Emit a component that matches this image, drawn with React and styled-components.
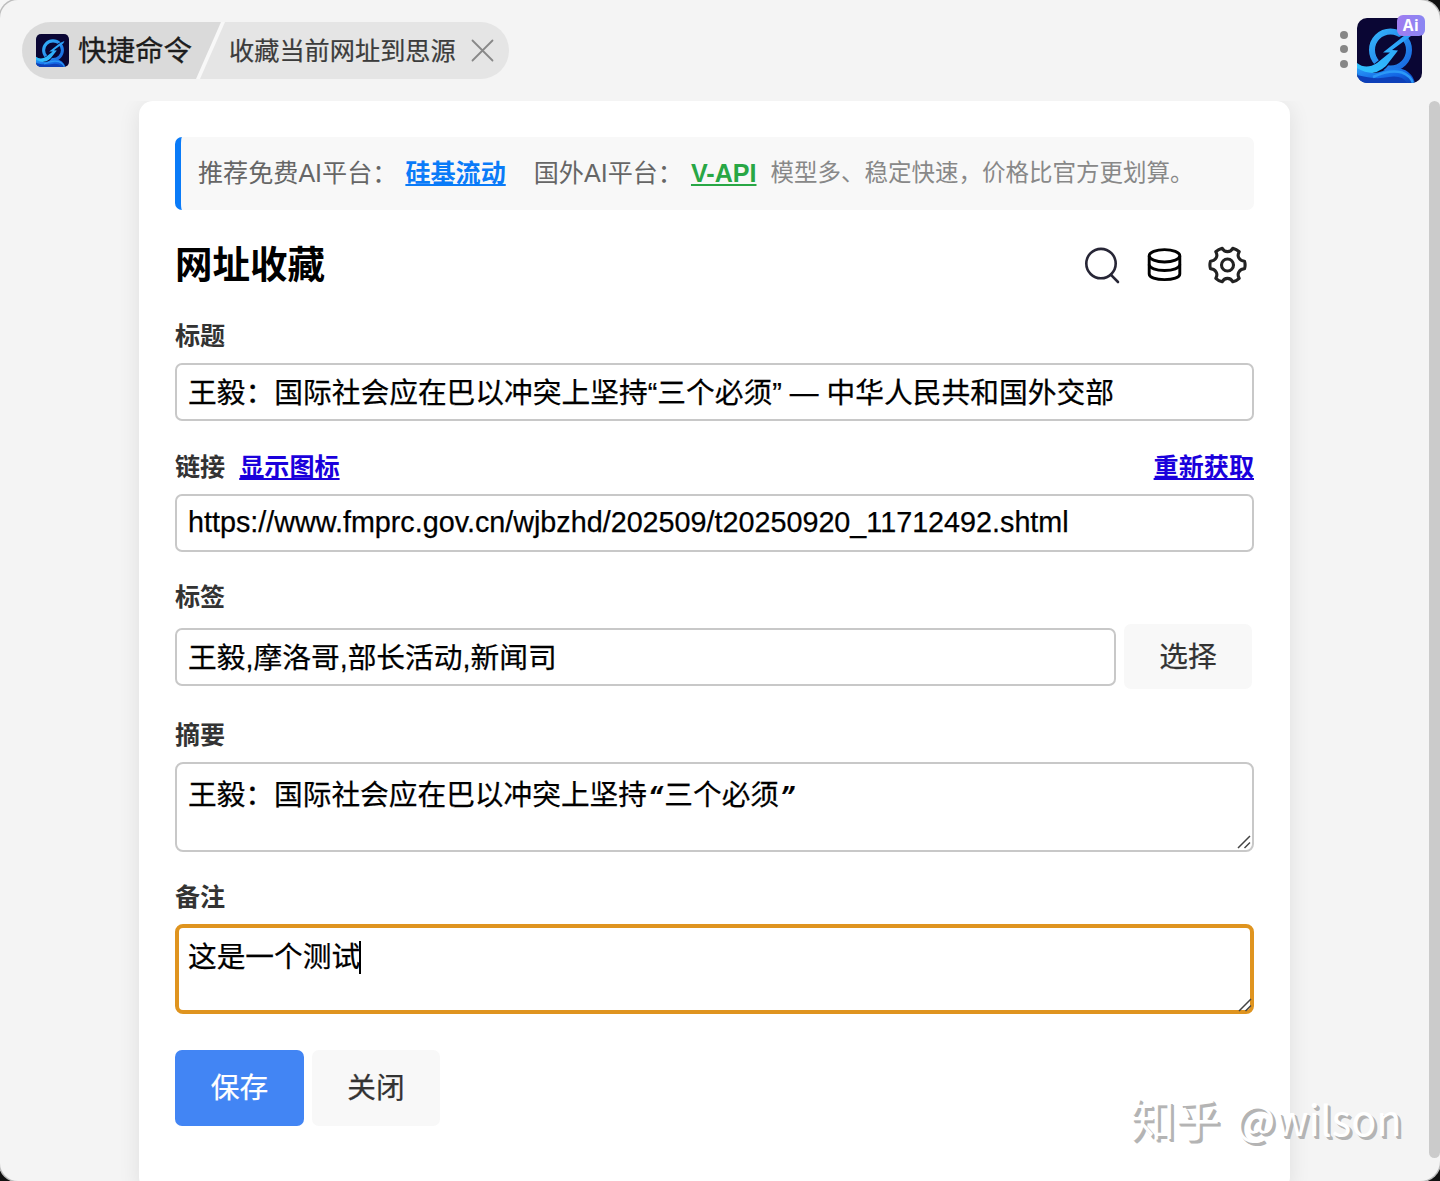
import React from "react";
import styled, { createGlobalStyle } from "styled-components";

const Global = createGlobalStyle`
  * { box-sizing: border-box; }
  html, body { margin: 0; padding: 0; }
  body {
    width: 1440px;
    height: 1181px;
    overflow: hidden;
    background:
      linear-gradient(#f6f6f6, #f6f6f6) 0 0 / 40px 40px no-repeat,
      #111;
    font-family: "Liberation Sans", "Noto Sans CJK SC", sans-serif;
  }
`;

const Window = styled.div`
  position: relative;
  display: flex;
  flex-direction: column;
  width: 1440px;
  height: 1181px;
  overflow: hidden;
  background: #f4f4f4;
  border-radius: 18px 20px 20px 18px;
  box-shadow: 0 0 0 1.5px #bdbdbd;
`;

const Header = styled.header`
  display: flex;
  flex: none;
  justify-content: space-between;
  align-items: flex-start;
  height: 101px;
  padding: 16px 16px 0 22px;
`;

const TabPill = styled.div`
  display: flex;
  width: 487px;
  height: 57px;
  margin-top: 6px;
  border-radius: 29px;
  background: #e5e5e5;
  overflow: hidden;
`;

const TabEdge = styled.div`
  width: 203px;
  height: 57px;
  background: #f8f8f8;
  clip-path: polygon(0 0, 203px 0, 178px 57px, 0 57px);
`;

const AppTab = styled.div`
  display: flex;
  align-items: center;
  gap: 9px;
  width: 203px;
  height: 57px;
  padding-left: 14px;
  background: #dadada;
  clip-path: polygon(0 0, 199px 0, 174px 57px, 0 57px);
  color: #1d1d1d;
  font-size: 28.5px;
  line-height: 60px;
  white-space: nowrap;
  -webkit-text-stroke: 0.3px currentColor;
`;

const PageTab = styled.div`
  display: flex;
  align-items: center;
  gap: 15px;
  padding-left: 4px;
  color: #3c3c3c;
  font-size: 25.2px;
  line-height: 58px;
  white-space: nowrap;
  -webkit-text-stroke: 0.2px currentColor;
`;

const HeaderRight = styled.div`
  display: flex;
  gap: 9px;
`;

const Dots = styled.div`
  display: flex;
  flex-direction: column;
  gap: 6.3px;
  padding-top: 15px;
`;

const Dot = styled.i`
  width: 8px;
  height: 8px;
  border-radius: 50%;
  background: #868686;
`;

const Brand = styled.div`
  position: relative;
  width: 67px;
  padding-top: 2px;
`;

const AiBadge = styled.span`
  position: absolute;
  top: -1px;
  left: 40px;
  width: 28px;
  height: 21px;
  border-radius: 6px;
  background: linear-gradient(90deg, #a07cf0, #8a86f2);
  color: #fff;
  font: 700 15.5px/21px "Open Sans", "Noto Sans", sans-serif;
  letter-spacing: 0.6px;
  text-align: center;
`;

const Main = styled.main`
  display: flex;
  flex: 1;
  justify-content: space-between;
  padding-left: 139px;
  overflow: hidden;
`;

const Card = styled.section`
  display: flex;
  flex: none;
  flex-direction: column;
  width: 1151px;
  height: 1090px;
  padding: 36px 36px 0;
  border-radius: 14px;
  background: #fff;
  box-shadow: 0 4px 22px rgba(0, 0, 0, 0.09);
`;

const Scrollbar = styled.div`
  width: 11px;
  height: 1057px;
  border-radius: 6px;
  background: #cbcbcb;
`;

const Tip = styled.div`
  display: flex;
  flex: none;
  align-items: center;
  height: 73px;
  padding-left: 17px;
  border-left: 6px solid #0a7bf8;
  border-radius: 7px;
  background: #f8f8f8;
  color: #666;
  font-size: 25.1px;
  line-height: 35px;
  white-space: nowrap;
`;

const TipLink = styled.a`
  margin: 0 ${(p) => p.$after}px 0 8px;
  color: ${(p) => p.$color};
  font-weight: 700;
  text-decoration: underline;
  text-decoration-thickness: 2px;
  text-underline-offset: 2px;
`;

const TipNote = styled.span`
  color: #888;
  font-size: 23.5px;
`;

const TitleBar = styled.div`
  display: flex;
  flex: none;
  justify-content: space-between;
  align-items: center;
  height: 110px;
`;

const Title = styled.h1`
  margin: 0;
  color: #000;
  font-size: 37.5px;
  line-height: 54px;
`;

const Tools = styled.div`
  display: flex;
  align-items: center;
  gap: 22px;
  padding-right: 6px;
`;

const Field = styled.div`
  display: flex;
  flex: none;
  flex-direction: column;
  height: ${(p) => p.$height}px;
`;

const Label = styled.div`
  display: flex;
  flex: none;
  gap: 14px;
  height: 43px;
  color: #333;
  font-size: 25.1px;
  font-weight: 700;
  line-height: 32px;
`;

const LabelLink = styled.a`
  margin-left: ${(p) => (p.$end ? "auto" : "0")};
  color: #1a00dc;
  text-decoration: underline;
  text-decoration-thickness: 2px;
  text-underline-offset: 2px;
`;

const InputRow = styled.div`
  display: flex;
  align-items: center;
  gap: 8px;
  padding-right: 2px;
`;

const Input = styled.div`
  flex: ${(p) => (p.$grow ? 1 : "none")};
  height: 58px;
  padding: 0 11px;
  border: 2px solid #c8c8c8;
  border-radius: 7px;
  background: #fff;
  color: #000;
  font-size: 28.74px;
  line-height: ${(p) => (p.$latin ? 52 : 56)}px;
  white-space: pre;
  -webkit-text-stroke: 0.25px currentColor;
`;

const TextArea = styled.div`
  position: relative;
  display: flex;
  flex: none;
  height: 90px;
  padding: ${(p) => (p.$focused ? "8px 9px" : "10px 11px")};
  border: ${(p) => (p.$focused ? "4px solid #df941f" : "2px solid #c8c8c8")};
  border-radius: 8px;
  background: #fff;
  color: #000;
  font-size: 28.7px;
  line-height: 42px;
  white-space: pre;
  -webkit-text-stroke: 0.25px currentColor;
`;

const MonoQuote = styled.span`
  display: inline-block;
  width: 17.3px;
  font: italic 700 24px/20px "DejaVu Sans Mono", monospace;
  text-align: center;
`;

const Caret = styled.i`
  width: 2px;
  height: 33px;
  margin: 5px 0 0 -1px;
  background: #000;
`;

const GripBox = styled.svg`
  position: absolute;
  right: ${(p) => (p.$focused ? -2 : 1)}px;
  bottom: ${(p) => (p.$focused ? -2 : 1)}px;
`;

const Button = styled.button`
  width: ${(p) => p.$width || 128}px;
  height: ${(p) => p.$height}px;
  padding: 0;
  border: 0;
  border-radius: 7px;
  background: ${(p) => (p.$primary ? "#4285f4" : "#f8f8f8")};
  color: ${(p) => (p.$primary ? "#fff" : "#333")};
  font: 28.7px/42px "Liberation Sans", "Noto Sans CJK SC", sans-serif;
  -webkit-text-stroke: 0.25px currentColor;
`;

const Actions = styled.div`
  display: flex;
  gap: 8px;
`;

const Watermark = styled.div`
  position: absolute;
  left: 1130px;
  top: 1086px;
  display: flex;
  gap: 16px;
  color: #fff;
  font: 400 45px/64px "Noto Sans CJK SC", sans-serif;
  text-shadow: 2px 2px 0 #b4b4b4, 3px 3px 0 #b4b4b4;
  white-space: pre;
`;

const Handle = styled.span`
  font-size: 41.5px;
`;

function Logo({ size, id }) {
  return (
    <svg width={size} height={size} viewBox="0 0 65 65">
      <defs>
        <linearGradient id={id + "a"} x1="0" y1="0" x2="1" y2="1">
          <stop offset="0" stopColor="#35b4fb" />
          <stop offset="1" stopColor="#1765e0" />
        </linearGradient>
        <linearGradient id={id + "b"} x1="1" y1="0" x2="0" y2="1">
          <stop offset="0" stopColor="#2b9af8" />
          <stop offset="1" stopColor="#31c3fd" />
        </linearGradient>
        <linearGradient id={id + "d"} x1="0" y1="0" x2="1" y2="1">
          <stop offset="0" stopColor="#2a9df8" />
          <stop offset="0.6" stopColor="#1264e4" />
          <stop offset="1" stopColor="#0b3cb0" />
        </linearGradient>
        <clipPath id={id + "c"}>
          <rect width="65" height="65" rx="10" />
        </clipPath>
      </defs>
      <g clipPath={`url(#${id}c)`}>
        <rect width="65" height="65" fill="#0a0634" />
        <circle cx="33.5" cy="32" r="18.5" fill="none" stroke={`url(#${id}a)`} strokeWidth="6" />
        <path d="M56 13 L42 19 L25 34 L31 35 L17 46 Q9 51 0 45 V60 Q17 62 29 50 L44 32 L37 31 Z" fill="#0a0634" />
        <path d="M56 14 Q47 17 43 21 L26 34.5 L33 34.5 L20 45 Q9 52 0 45 V54 Q17 59 29 48 L41 32.5 L35 32 L54 18 Z" fill={`url(#${id}b)`} />
        <path d="M0 50 Q13 58 26 53 Q42 47 51 54 Q57 59 58 65 H0 Z" fill={`url(#${id}d)`} />
        <path d="M0 57 Q18 62 32 59 Q45 57 50 65 H0 Z" fill="#0d3fb8" />
        <path d="M16 59 Q33 51 45 54.5 Q54 58 56 65" fill="none" stroke="#2b98f7" strokeWidth="2.5" />
      </g>
    </svg>
  );
}

const CloseIcon = () => (
  <svg width="23" height="23" viewBox="0 0 23 23" fill="none" stroke="#888" strokeWidth="1.8" strokeLinecap="round">
    <path d="M1.5 1.5 L21.5 21.5 M21.5 1.5 L1.5 21.5" />
  </svg>
);

const SearchIcon = () => (
  <svg width="42" height="42" viewBox="0 0 42 42" fill="none" stroke="#272636" strokeWidth="2.6" strokeLinecap="round">
    <circle cx="19" cy="19.6" r="14.7" />
    <path d="M29 30.8 L36 38" />
  </svg>
);

const DatabaseIcon = () => (
  <svg width="38" height="42" viewBox="0 0 38 42" fill="none" stroke="#000" strokeWidth="2.9">
    <ellipse cx="18.5" cy="11.8" rx="15.3" ry="6.2" />
    <path d="M3.2 12 V30 C3.2 33.5 10 35.6 18.5 35.6 S33.8 33.5 33.8 30 V12" />
    <path d="M3.2 20.5 C3.2 24 10 26.5 18.5 26.5 S33.8 24 33.8 20.5" />
  </svg>
);

const GearIcon = () => (
  <svg width="42" height="42" viewBox="0 0 42 42" fill="none" stroke="#222" strokeWidth="3.1" strokeLinejoin="round">
    <path d="M16.2 4.2 C17.2 6.2 18.8 7.6 21.5 7.6 C24.2 7.6 25.8 6.2 26.8 4.2 C29.3 4.8 31.4 6 33.2 7.7 C32 9.7 31.6 11.8 32.9 14.1 C34.2 16.4 36.2 17.1 38.5 17.2 Q39.7 21 38.5 24.8 C36.2 24.9 34.2 25.6 32.9 27.9 C31.6 30.2 32 32.3 33.2 34.3 C31.4 36 29.3 37.2 26.8 37.8 C25.8 35.8 24.2 34.4 21.5 34.4 C18.8 34.4 17.2 35.8 16.2 37.8 C13.7 37.2 11.6 36 9.8 34.3 C11 32.3 11.4 30.2 10.1 27.9 C8.8 25.6 6.8 24.9 4.5 24.8 Q3.3 21 4.5 17.2 C6.8 17.1 8.8 16.4 10.1 14.1 C11.4 11.8 11 9.7 9.8 7.7 C11.6 6 13.7 4.8 16.2 4.2 Z" />
    <circle cx="21.5" cy="21" r="6" />
  </svg>
);

const Grip = ({ focused }) => (
  <GripBox $focused={focused} width="14" height="14" viewBox="0 0 14 14" fill="none" stroke="#444" strokeWidth="1.5">
    <path d="M1 13 L13 1 M7.5 13 L13 7.5" />
  </GripBox>
);

export default function App() {
  return (
    <>
      <Global />
      <Window>
        <Header>
          <TabPill>
            <TabEdge>
              <AppTab>
                <Logo size={33} id="s" />
                <span>快捷命令</span>
              </AppTab>
            </TabEdge>
            <PageTab>
              <span>收藏当前网址到思源</span>
              <CloseIcon />
            </PageTab>
          </TabPill>
          <HeaderRight>
            <Dots>
              <Dot />
              <Dot />
              <Dot />
            </Dots>
            <Brand>
              <Logo size={65} id="l" />
              <AiBadge>Ai</AiBadge>
            </Brand>
          </HeaderRight>
        </Header>
        <Main>
          <Card>
            <Tip>
              <span>推荐免费AI平台：</span>
              <TipLink $color="#0a7bf8" $after={28}>硅基流动</TipLink>
              <span>国外AI平台：</span>
              <TipLink $color="#28a745" $after={14}>V-API</TipLink>
              <TipNote>模型多、稳定快速，价格比官方更划算。</TipNote>
            </Tip>
            <TitleBar>
              <Title>网址收藏</Title>
              <Tools>
                <SearchIcon />
                <DatabaseIcon />
                <GearIcon />
              </Tools>
            </TitleBar>
            <Field $height={131}>
              <Label>标题</Label>
              <Input>王毅：国际社会应在巴以冲突上坚持“三个必须” — 中华人民共和国外交部</Input>
            </Field>
            <Field $height={130}>
              <Label>
                <span>链接</span>
                <LabelLink>显示图标</LabelLink>
                <LabelLink $end>重新获取</LabelLink>
              </Label>
              <Input $latin>https://www.fmprc.gov.cn/wjbzhd/202509/t20250920_11712492.shtml</Input>
            </Field>
            <Field $height={138}>
              <Label>标签</Label>
              <InputRow>
                <Input $grow>王毅,摩洛哥,部长活动,新闻司</Input>
                <Button $height={65}>选择</Button>
              </InputRow>
            </Field>
            <Field $height={162}>
              <Label>摘要</Label>
              <TextArea>
                <span>
                  王毅：国际社会应在巴以冲突上坚持<MonoQuote>“</MonoQuote>三个必须<MonoQuote>”</MonoQuote>
                </span>
                <Grip />
              </TextArea>
            </Field>
            <Field $height={169}>
              <Label>备注</Label>
              <TextArea $focused>
                <span>这是一个测试</span>
                <Caret />
                <Grip focused />
              </TextArea>
            </Field>
            <Actions>
              <Button $primary $width={129} $height={76}>保存</Button>
              <Button $height={76}>关闭</Button>
            </Actions>
          </Card>
          <Scrollbar />
        </Main>
        <Watermark>
          <span>知乎</span>
          <Handle>@wilson</Handle>
        </Watermark>
      </Window>
    </>
  );
}
